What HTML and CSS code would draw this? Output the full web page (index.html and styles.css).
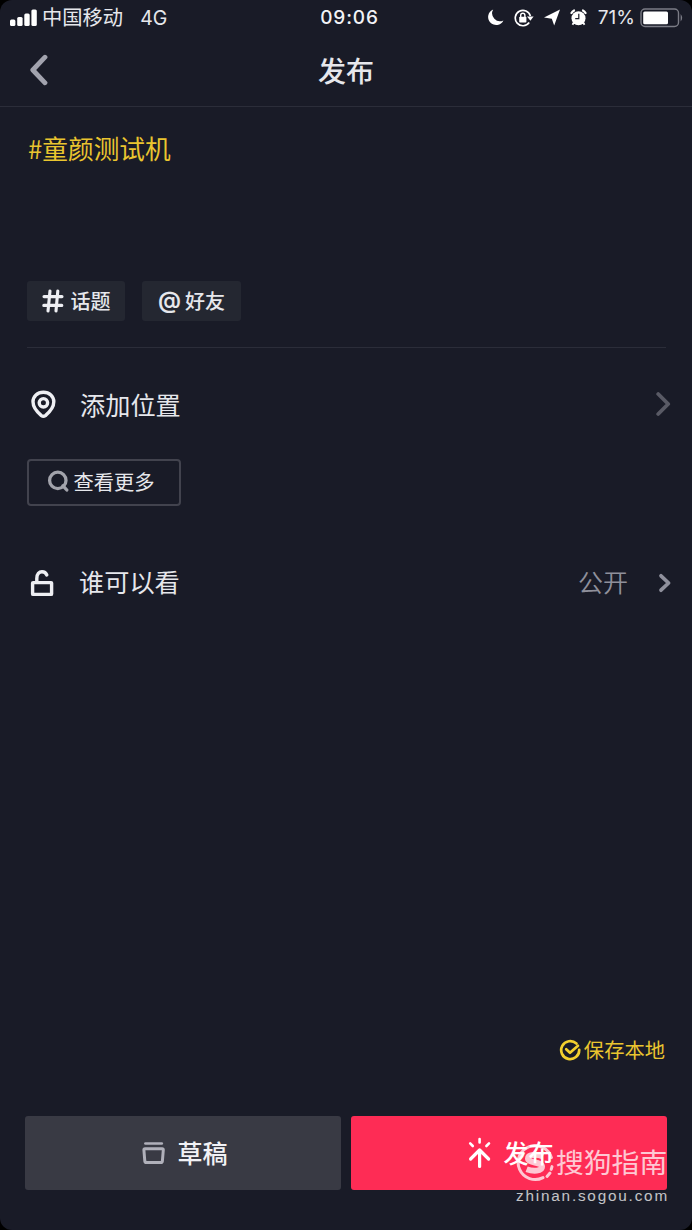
FILE: index.html
```
<!DOCTYPE html>
<html lang="zh-CN">
<head>
    <meta charset="UTF-8">
    <meta name="viewport" content="width=device-width, initial-scale=1.0">
    <title>发布</title>
    <link rel="stylesheet" href="styles.css">
</head>
<body>
    <div class="screen">
        <div class="status-bar">
            <div class="status-left">
                <svg width="27" height="18" viewBox="0 0 27 18" fill="#fff">
                    <rect x="0" y="10.5" width="5.4" height="6.5" rx="1.5"/>
                    <rect x="7.2" y="8" width="5.4" height="9" rx="1.5"/>
                    <rect x="14.3" y="4.5" width="5.4" height="12.5" rx="1.5"/>
                    <rect x="21.4" y="0.5" width="5.4" height="16.5" rx="1.5"/>
                </svg>
                <span class="carrier">中国移动</span>
                <span class="network">4G</span>
            </div>
            <span class="time">09:06</span>
            <div class="status-right">
                <svg class="moon" width="16" height="17" viewBox="0 0 16 17" fill="#fff">
                    <path d="M5.2 0.6A8 8 0 1 0 15.4 11.4A7.8 7.8 0 0 1 5.2 0.6z"/>
                </svg>
                <svg class="rotation" width="20" height="18" viewBox="0 0 20 18" fill="none" stroke="#fff" stroke-width="1.7">
                    <path d="M15.2 13.6A7.7 7.7 0 1 1 16.4 7"/>
                    <path d="M13 7.6h6.6L16.4 11.8z" fill="#fff" stroke="none"/>
                    <rect x="5.2" y="7.8" width="7.2" height="5.8" rx="0.8" fill="#fff" stroke="none"/>
                    <path d="M6.7 8.4V6.4a2.1 2.1 0 0 1 4.2 0v2" stroke-width="1.4"/>
                </svg>
                <svg class="gps" width="16" height="17" viewBox="0 0 16 17" fill="#fff">
                    <path d="M16 0.4L10.2 16.4L7.8 9.8L0 8.4z"/>
                </svg>
                <svg class="alarm" width="17" height="17" viewBox="0 0 17 17">
                    <path d="M0.9 4.8A9 9 0 0 1 4.8 1M16.1 4.8a9 9 0 0 0-3.9-3.8" stroke="#fff" stroke-width="2" fill="none"/>
                    <circle cx="8.5" cy="9.2" r="7" fill="#fff"/>
                    <path d="M3.8 13.5L2.5 15.8M13.2 13.5l1.3 2.3" stroke="#fff" stroke-width="1.8"/>
                    <path d="M8.8 4.8v4.8H5.2" stroke="#191b27" stroke-width="1.2" fill="none"/>
                </svg>
                <span class="percent">71%</span>
                <svg class="battery" width="44" height="20" viewBox="0 0 44 20">
                    <rect x="1" y="1" width="37.5" height="17.5" rx="4" fill="none" stroke="#7b7c86" stroke-width="1.4"/>
                    <rect x="3.2" y="3.4" width="24.8" height="12.8" rx="1.5" fill="#fff"/>
                    <path d="M40.6 6q3.2 3.8 0 7.6z" fill="#7b7c86"/>
                </svg>
            </div>
        </div>

        <header class="header">
            <svg class="back" width="20" height="32" viewBox="0 0 20 32" fill="none" stroke="#a2a3ae" stroke-width="4.8" stroke-linecap="round" stroke-linejoin="round">
                <path d="M17 3.2L4.8 16L17 28.8"/>
            </svg>
            <h1>发布</h1>
        </header>

        <main class="content">
            <section class="editor">
                <p class="hashtag">#童颜测试机</p>
                <div class="tags">
                    <button class="tag">
                        <svg width="22" height="24" viewBox="0 0 22 24" fill="none" stroke="#eeeff3" stroke-width="3.1" stroke-linecap="round">
                            <path d="M8 2L6 22M15.8 2L14 22M2 7.6h18M1.8 16.4h18"/>
                        </svg>
                        <span>话题</span>
                    </button>
                    <button class="tag">
                        <span class="at">@</span>
                        <span>好友</span>
                    </button>
                </div>
            </section>

            <section class="row">
                <svg class="row-icon" width="26" height="30" viewBox="0 0 26 30" fill="none" stroke="#eeeff3" stroke-width="3.4">
                    <path d="M13.4 3.2C7.4 3.2 3 7.4 3 12.8C3 18.6 8 23.8 11.4 26.6Q13.4 28 15.4 26.6C18.8 23.8 23.8 18.6 23.8 12.8C23.8 7.4 19.4 3.2 13.4 3.2z"/>
                    <circle cx="13.4" cy="13.8" r="4.2"/>
                </svg>
                <span class="row-label">添加位置</span>
                <svg class="arrow" width="16" height="26" viewBox="0 0 16 26" fill="none" stroke="#595a65" stroke-width="3.8" stroke-linecap="round" stroke-linejoin="round">
                    <path d="M2.2 3L12.2 13L2.2 23"/>
                </svg>
            </section>

            <button class="more">
                <svg width="22" height="22" viewBox="0 0 22 22" fill="none" stroke="#a2a3ab" stroke-width="3.3">
                    <circle cx="10.8" cy="10.4" r="8.2"/>
                    <path d="M16 15.8L19.8 20" stroke-linecap="round"/>
                </svg>
                <span>查看更多</span>
            </button>

            <section class="row row-privacy">
                <svg class="row-icon" width="26" height="28" viewBox="0 0 26 28" fill="none" stroke="#eeeff3" stroke-width="3.4">
                    <rect x="2.6" y="13.6" width="19" height="11.8" rx="0.5"/>
                    <path d="M6.8 13.4V9.4C6.8 5 9.2 2.8 12 2.8C14.4 2.8 16 4 16.8 6" stroke-linecap="round"/>
                </svg>
                <span class="row-label">谁可以看</span>
                <span class="row-value">公开</span>
                <svg class="arrow" width="14" height="20" viewBox="0 0 14 20" fill="none" stroke="#8f909c" stroke-width="3.7" stroke-linecap="round" stroke-linejoin="round">
                    <path d="M3 2.8L10.6 10L3 17.2"/>
                </svg>
            </section>
        </main>

        <div class="save">
            <svg width="22" height="22" viewBox="0 0 22 22" fill="none" stroke="#f2cf2e" stroke-width="2.7" stroke-linecap="round" stroke-linejoin="round">
                <path d="M17.4 4.6A9 9 0 1 0 20.2 10.8"/>
                <path d="M7.2 10.2L11 13.8L19 6.8"/>
            </svg>
            <span>保存本地</span>
        </div>

        <footer class="actions">
            <button class="btn btn-draft">
                <svg width="24" height="24" viewBox="0 0 24 24" fill="none" stroke="#b0b0ba" stroke-width="3" stroke-linecap="round" stroke-linejoin="round">
                    <path d="M4.4 2.5h16.4" stroke-width="2.6"/>
                    <path d="M4 7.8h17.2q1.2 0 1.1 1.2l-0.9 11q-0.2 1.6-1.8 1.6H5.6q-1.6 0-1.8-1.6L2.9 9q-0.1-1.2 1.1-1.2z"/>
                </svg>
                <span>草稿</span>
            </button>
            <button class="btn btn-publish">
                <svg width="24" height="32" viewBox="0 0 24 32" fill="none" stroke="#fff" stroke-width="3.2" stroke-linecap="round" stroke-linejoin="round">
                    <path d="M12.6 14V29.5M3.6 22L12.6 13L21.6 22"/>
                    <path d="M12.6 2v3.4M3.2 6.4l2.6 2.6M22 6.4l-2.6 2.6" stroke-width="2.6"/>
                </svg>
                <span>发布</span>
            </button>
        </footer>

        <div class="watermark">
            <div class="watermark-brand">
                <svg width="38" height="38" viewBox="0 0 38 38" fill="none" stroke="#fff" stroke-linecap="round">
                    <path d="M35.4 13.6A17 17 0 1 0 27 33.6" stroke-width="3"/>
                    <path d="M31 32.4L34 29M35.2 25.4L36 22.6" stroke-width="3"/>
                    <path d="M27 12.4C20 9.8 12 10.4 12 14.6C12 19.4 26 17.6 26 22.8C26 27.4 17 27.6 10.6 25.2" stroke-width="6" stroke-linecap="butt"/>
                </svg>
                <span>搜狗指南</span>
            </div>
            <div class="watermark-url">zhinan.sogou.com</div>
        </div>
    </div>
</body>
</html>
```

FILE: styles.css
```
* {
    margin: 0;
    padding: 0;
    box-sizing: border-box;
}
body {
    background: #000;
    font-family: "Noto Sans CJK SC", sans-serif;
    color: #e6e7ec;
}
svg {
    display: block;
    flex-shrink: 0;
}
button {
    border: none;
    background: none;
    font-family: inherit;
    color: inherit;
}
.screen {
    position: relative;
    display: flex;
    flex-direction: column;
    height: 1230px;
    background: #191b27;
    border-radius: 12px;
    overflow: hidden;
}

/* status bar */
.status-bar {
    display: grid;
    grid-template-columns: 1fr auto 1fr;
    align-items: center;
    height: 35px;
    padding: 0 8px 0 10px;
    font-family: Inter, "Noto Sans CJK SC", sans-serif;
    font-size: 20px;
    line-height: 24px;
}
.status-left,
.status-right {
    display: flex;
    align-items: center;
}
.status-right {
    justify-content: flex-end;
}
.carrier {
    margin-left: 5px;
    font-size: 20.3px;
}
.network {
    margin-left: 17px;
    font-size: 19.5px;
}
.time {
    padding: 1px 0 0 5px;
    font-size: 19px;
    font-weight: 550;
    letter-spacing: 0.9px;
    color: #f2f3f6;
}
.rotation {
    margin-left: 10px;
}
.gps {
    margin-left: 10px;
}
.alarm {
    margin-left: 10px;
    margin-right: 1px;
}
.percent {
    margin-left: 10px;
    padding-top: 1px;
    font-size: 19px;
}
.battery {
    margin-left: 5px;
}

/* header */
.header {
    position: relative;
    display: flex;
    align-items: center;
    justify-content: center;
    height: 72px;
    padding-bottom: 2px;
    border-bottom: 1px solid #2b2d39;
}
.header h1 {
    font-size: 28px;
    font-weight: 500;
    line-height: 40px;
}
.back {
    position: absolute;
    left: 28px;
    top: 19px;
}

/* content */
.content {
    flex: 1;
    padding: 0 20px 0 27px;
}
.editor {
    display: flex;
    flex-direction: column;
    justify-content: space-between;
    height: 241px;
    margin-right: 6px;
    padding: 23px 0 26px;
    border-bottom: 1px solid #2b2d39;
}
.hashtag {
    padding-left: 1px;
    font-size: 25.7px;
    line-height: 36px;
    color: #eac52f;
}
.tags {
    display: flex;
    gap: 17px;
}
.tag {
    display: flex;
    align-items: center;
    justify-content: center;
    gap: 7px;
    width: 98px;
    height: 40px;
    background: #242731;
    border-radius: 3px;
    font-size: 20px;
    font-weight: 500;
    line-height: 28px;
}
.tag:last-child {
    width: 99px;
}
.tag .at {
    margin-right: -3px;
    padding-bottom: 2px;
    font-family: Inter, sans-serif;
    font-size: 23px;
    font-weight: 600;
}
.row {
    display: flex;
    align-items: center;
    height: 112px;
    padding-left: 3px;
}
.row-label {
    margin-left: 24px;
    padding-bottom: 1px;
    font-size: 25.2px;
    line-height: 36px;
}
.arrow {
    margin-left: auto;
}
.more {
    display: flex;
    align-items: center;
    justify-content: center;
    gap: 4px;
    width: 154px;
    height: 47px;
    margin-top: -1px;
    padding: 0 6px 4px 0;
    border: 2px solid #42434e;
    border-radius: 4px;
    font-size: 20.3px;
    line-height: 28px;
}
.row-privacy {
    margin-top: 21px;
}
.row-privacy .row-label {
    margin-left: 23px;
    padding-bottom: 4px;
}
.row-value {
    margin-left: auto;
    padding-bottom: 4px;
    font-size: 25px;
    font-weight: 350;
    line-height: 36px;
    color: #8f909b;
}
.row-value + .arrow {
    margin-left: 30px;
}

/* bottom */
.save {
    display: flex;
    align-items: center;
    justify-content: flex-end;
    gap: 3px;
    margin-bottom: 50px;
    padding-right: 27px;
    font-size: 20.3px;
    line-height: 30px;
    color: #eac52f;
}
.save span {
    padding-bottom: 2px;
}
.actions {
    display: flex;
    gap: 10px;
    padding: 0 25px 40px;
}
.btn {
    display: flex;
    flex: 1;
    align-items: center;
    justify-content: center;
    gap: 12px;
    height: 74px;
    padding-left: 3px;
    border-radius: 3px;
    font-size: 25px;
    font-weight: 500;
    line-height: 36px;
    color: #f2f2f6;
}
.btn span {
    padding-bottom: 2px;
}
.btn-draft {
    background: #393a44;
}
.btn-publish {
    background: #fe2c55;
    color: #fff;
}

/* watermark */
.watermark {
    position: absolute;
    left: 516px;
    bottom: 24px;
    color: #fff;
    opacity: 0.74;
}
.watermark-brand {
    display: flex;
    align-items: center;
    gap: 2px;
    margin-bottom: 4px;
    font-size: 27.8px;
    line-height: 35px;
}
.watermark-brand span {
    padding-bottom: 3px;
}
.watermark-url {
    font-family: "Liberation Sans", Arial, sans-serif;
    font-size: 15.3px;
    line-height: 20px;
    letter-spacing: 1.8px;
}
```
